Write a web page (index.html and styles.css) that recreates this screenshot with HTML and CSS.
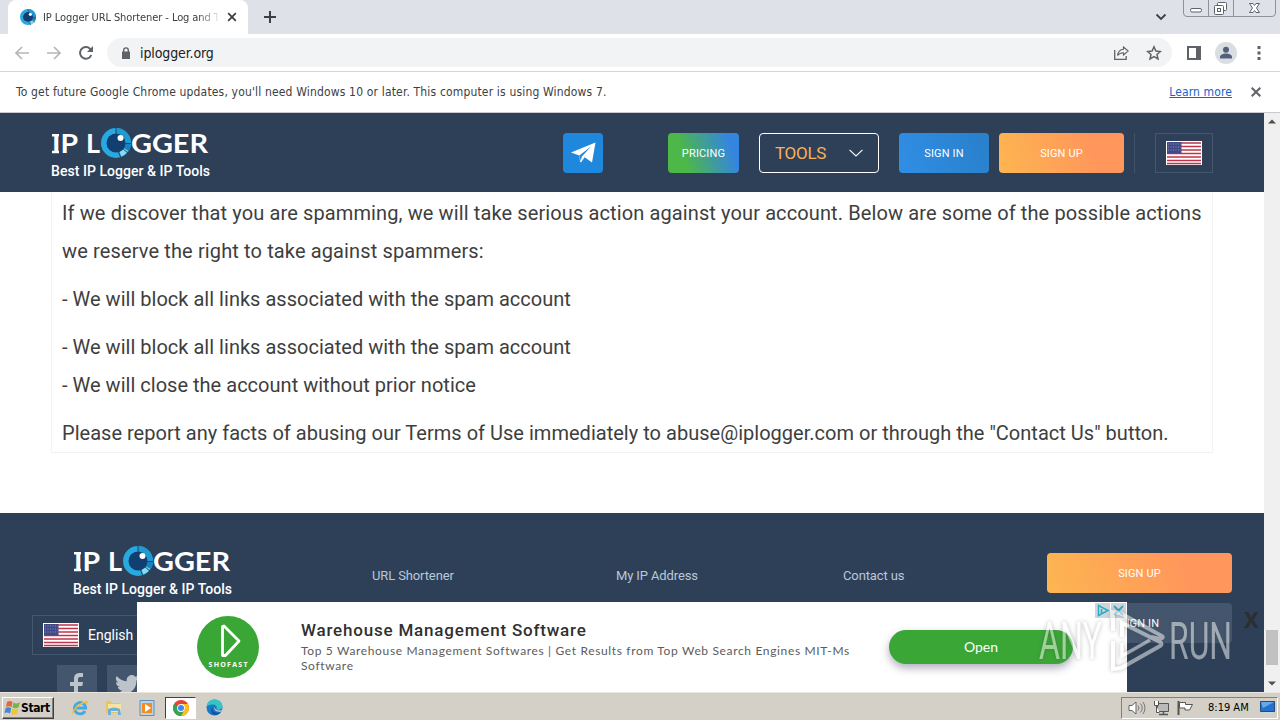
FILE: index.html
```html
<!DOCTYPE html>
<html lang="en">
  <head>
    <meta charset="utf-8">
    <title>IP Logger URL Shortener</title>
    <link rel="stylesheet" href="styles.css">
  </head>
  <body>
    <svg class="defs" width="0" height="0">
      <defs>
        <symbol id="eye" viewBox="0 0 30 30">
          <circle cx="15" cy="15" r="12" fill="none" stroke="#27a9e1" stroke-width="6"/>
          <path d="M15 3a12 12 0 0 1 12 12" fill="none" stroke="#1f9bd1" stroke-width="6"/>
          <path d="M27 15a12 12 0 0 1-2.800 7.700" fill="none" stroke="#1583bd" stroke-width="6"/>
          <path d="M25 21.500a12 12 0 0 1-5.500 4.600" fill="none" stroke="#83dcf7" stroke-width="5"/>
          <path d="M15 0v6M24.500 15.500h5.500M21 20l6 5M17.500 24l2.500 6" stroke="#2e4057" stroke-width="1"/>
          <circle cx="15" cy="15" r="9.500" fill="#123f72"/>
          <circle cx="19.500" cy="10" r="3" fill="#fff"/>
        </symbol>
        <symbol id="logo" viewBox="0 0 158 32">
          <g class="logo-text">
            <text x="0" y="25" textLength="26" lengthAdjust="spacingAndGlyphs">IP</text>
            <text x="34" y="25" textLength="14" lengthAdjust="spacingAndGlyphs">L</text>
            <text x="79" y="25" textLength="77" lengthAdjust="spacingAndGlyphs">GGER</text>
          </g>
          <path d="M0 7.200h7M0 24h7" stroke="#fff" stroke-width="2.400"/>
          <use href="#eye" x="49" y="0" width="30" height="30"/>
        </symbol>
        <symbol id="flag" viewBox="0 0 36 24">
          <path d="M0 0h36v24H0z" fill="#fff"/>
          <path d="M1 2h34M1 5.500h34M1 9h34M1 12.500h34M1 16h34M1 19.500h34M1 22.500h34" stroke="#bf3448" stroke-width="1.700"/>
          <path d="M1 1h14.500v11.500H1z" fill="#414a86"/>
          <path d="M2 3h13M2 6h13M2 9h13" stroke="#8990b8" stroke-width="1" stroke-dasharray="1 1.500"/>
        </symbol>
      </defs>
    </svg>

    <div class="tabstrip">
      <div class="tab">
        <svg class="favicon" width="16" height="16"><use href="#eye"/></svg>
        <span class="tab-title">IP Logger URL Shortener - Log and T</span>
        <svg class="tab-close" width="10" height="10" viewBox="0 0 10 10"><path d="M1.200 1.200l7.600 7.600M8.800 1.200L1.200 8.800" stroke="#3c4043" stroke-width="1.800"/></svg>
      </div>
      <svg class="new-tab" width="12" height="12" viewBox="0 0 12 12"><path d="M6 0v12M0 6h12" stroke="#3c4043" stroke-width="2"/></svg>
      <svg class="tab-search" width="12" height="8" viewBox="0 0 12 8"><path d="M1.500 1.500L6 6l4.500-4.500" fill="none" stroke="#3c4043" stroke-width="1.800"/></svg>
      <svg class="window-buttons" width="93" height="17" viewBox="0 0 93 17">
        <path d="M.5 0v13q0 3.500 3.500 3.500h85q3.500 0 3.500-3.500V0M25.500 0v16M50.500 0v16" fill="none" stroke="#8e9299"/>
        <g fill="#fff" stroke="#5f6368">
          <rect x="7.500" y="8.500" width="11" height="3.500" rx="1.500"/>
          <rect x="34.500" y="2.500" width="9" height="8" rx="1"/>
          <rect x="31.500" y="5.500" width="9" height="9" rx="1"/>
          <rect x="34.500" y="8.500" width="3" height="3"/>
          <path d="M66.500 3.500h3.500l1.500 2 1.500-2h3.500L73.500 8l3 4.500H73l-1.500-2-1.500 2h-3.500L69.500 8z"/>
        </g>
      </svg>
    </div>

    <div class="toolbar">
      <svg class="arrow" width="14" height="14" viewBox="0 0 14 14"><path d="M14 7H1.500M7 1L1 7l6 6" fill="none" stroke="#b5b7ba" stroke-width="1.700"/></svg>
      <svg class="arrow" width="14" height="14" viewBox="0 0 14 14"><path d="M0 7h12.500M7 1l6 6-6 6" fill="none" stroke="#b5b7ba" stroke-width="1.700"/></svg>
      <svg class="reload" width="14" height="14" viewBox="0 0 14 14"><path d="M12.300 9A5.800 5.800 0 1 1 11 2.800L12.500 4.500" fill="none" stroke="#5f6368" stroke-width="2"/><path d="M14 0v6H8z" fill="#5f6368"/></svg>
      <div class="address">
        <svg width="8" height="12" viewBox="0 0 8 12"><path d="M0 4.500h8V12H0z" fill="#5f6368"/><path d="M1.700 5V3.200a2.300 2.300 0 0 1 4.600 0V5" fill="none" stroke="#5f6368" stroke-width="1.400"/></svg>
        <span class="url">iplogger.org</span>
        <svg width="15" height="14" viewBox="0 0 15 14"><path d="M.7 4v9.300h11.500V10" fill="none" stroke="#5f6368" stroke-width="1.300"/><path d="M9.500 1l4.700 4-4.700 4V6.700C6.500 6.700 5 7.500 3.500 9.500 4 6 6 3.500 9.500 3.200z" fill="none" stroke="#5f6368" stroke-width="1.100"/></svg>
        <svg width="16" height="16" viewBox="0 0 16 16"><path d="M8 1.800l1.900 4.200 4.500.5-3.400 3 1 4.500-4-2.300L4 14l1-4.500-3.400-3L6.100 6z" fill="none" stroke="#5f6368" stroke-width="1.500"/></svg>
      </div>
      <svg class="panel" width="14" height="14" viewBox="0 0 14 14"><path d="M1 1h12v12H1z" fill="none" stroke="#5f6368" stroke-width="2"/><path d="M9 0h5v14H9z" fill="#5f6368"/></svg>
      <svg class="profile" width="22" height="22" viewBox="0 0 22 22"><circle cx="11" cy="11" r="11" fill="#dadde2"/><circle cx="11" cy="7.800" r="3" fill="#52607c"/><path d="M5 16.500v-1.300c0-2.500 3-3.700 6-3.700s6 1.200 6 3.700v1.300z" fill="#52607c"/></svg>
      <svg class="menu" width="4" height="14" viewBox="0 0 4 14"><path d="M.5 0h3v3h-3zM.5 5.500h3v3h-3zM.5 11h3v3h-3z" fill="#5f6368"/></svg>
    </div>

    <div class="infobar">
      <span class="infobar-text">To get future Google Chrome updates, you'll need Windows 10 or later. This computer is using Windows 7.</span>
      <a class="learn-more">Learn more</a>
      <svg width="10" height="10" viewBox="0 0 10 10"><path d="M.7.7l8.600 8.600M9.300.7L.7 9.300" stroke="#5f6368" stroke-width="2"/></svg>
    </div>

    <div class="viewport">
      <div class="page">
        <header>
          <div class="brand">
            <svg width="158" height="32"><use href="#logo"/></svg>
            <div class="tagline">Best IP Logger &amp; IP Tools</div>
          </div>
          <div class="telegram">
            <svg width="26" height="22" viewBox="0 0 26 22"><path d="M25.500.5L22 20.500l-7.300-5.300-3.600 5-1-.2-.8-6.500L1 10.500z" fill="#fff"/><path d="M9.300 13.500L21 4.500l-9.300 10.200-.9 4.600z" fill="#1f87dc"/></svg>
          </div>
          <div class="btn pricing">PRICING</div>
          <div class="tools">
            <span>TOOLS</span>
            <svg width="14" height="8" viewBox="0 0 14 8"><path d="M.5.8L7 7l6.500-6.200" fill="none" stroke="#fff" stroke-width="1.100"/></svg>
          </div>
          <div class="btn sign-in">SIGN IN</div>
          <div class="btn sign-up">SIGN UP</div>
          <div class="divider"></div>
          <div class="lang"><svg width="36" height="24"><use href="#flag"/></svg></div>
        </header>

        <article>
          <p><span class="line justified">If we discover that you are spamming, we will take serious action against your account. Below are some of the possible actions</span> <span class="line spammers">we reserve the right to take against spammers:</span></p>
          <p>- We will block all links associated with the spam account</p>
          <p>- We will block all links associated with the spam account<br>- We will close the account without prior notice</p>
          <p>Please report any facts of abusing our Terms of Use immediately to abuse@iplogger.com or through the "Contact Us" button.</p>
        </article>

        <footer>
          <div class="footer-left">
            <div class="brand">
              <svg width="158" height="32"><use href="#logo"/></svg>
              <div class="tagline">Best IP Logger &amp; IP Tools</div>
            </div>
            <div class="lang-select">
              <svg width="36" height="24"><use href="#flag"/></svg>
              <span>English</span>
            </div>
            <div class="social">
              <div><svg width="14" height="24" viewBox="0 0 14 24"><path d="M4 24V13H0V9h4V6c0-4 2-6 6-6h3v4h-3q-2 0-2 2v3h5l-.7 4H8v11z" fill="#bdc3cb"/></svg></div>
              <div><svg width="24" height="20" viewBox="0 0 24 20"><path d="M24 2.400a10 10 0 0 1-2.800.8A5 5 0 0 0 23.300.5a10 10 0 0 1-3.100 1.200A4.900 4.900 0 0 0 11.800 6.200 14 14 0 0 1 1.700 1a5 5 0 0 0 1.500 6.600A5 5 0 0 1 1 7a5 5 0 0 0 3.900 4.900 5 5 0 0 1-2.200.1 5 5 0 0 0 4.600 3.400A10 10 0 0 1 0 17.500a14 14 0 0 0 21.500-12A10 10 0 0 0 24 2.400z" fill="#bdc3cb"/></svg></div>
            </div>
          </div>
          <div class="footer-link shortener">URL Shortener</div>
          <div class="footer-link address-link">My IP Address</div>
          <div class="footer-link">Contact us</div>
          <div class="footer-buttons">
            <div class="btn sign-up">SIGN UP</div>
            <div class="btn muted">SIGN IN</div>
          </div>
        </footer>

        <div class="ad">
          <svg class="ad-logo" width="62" height="62" viewBox="0 0 62 62">
            <circle cx="31" cy="31" r="31" fill="#3aa636"/>
            <path d="M25.500 10.500v29l3 0 13.500-14.500-15-15z" fill="none" stroke="#fff" stroke-width="2.800" stroke-linejoin="round"/>
            <text x="11.500" y="50.500" textLength="39" class="ad-brand">SHOFAST</text>
          </svg>
          <div class="ad-copy">
            <div class="ad-title">Warehouse Management Software</div>
            <div class="ad-text">Top 5 Warehouse Management Softwares | Get Results from Top Web Search Engines MIT-Ms<br>Software</div>
          </div>
          <div class="ad-open">Open</div>
          <svg class="ad-choices" width="32" height="15" viewBox="0 0 32 15">
            <path d="M0 0h15v15H0zM16 0h15v15H16z" fill="#d1d5d8"/>
            <path d="M3.500 2.500v10L13 7.500zM6.500 6v4" fill="none" stroke="#20b0c9" stroke-width="1.500"/>
            <path d="M19 3l9 9M28 3l-9 9" stroke="#20b0c9" stroke-width="1.800"/>
          </svg>
        </div>
        <div class="ad-close">X</div>
      </div>

      <div class="scrollbar">
        <svg width="8" height="5" viewBox="0 0 8 5"><path d="M0 4.500L4 .5l4 4z" fill="#505050"/></svg>
        <div class="thumb"></div>
        <svg width="8" height="5" viewBox="0 0 8 5"><path d="M0 .5l4 4 4-4z" fill="#505050"/></svg>
      </div>
    </div>

    <svg class="watermark" width="196" height="66" viewBox="0 0 196 66">
      <g class="watermark-text">
        <text x="1" y="52" textLength="63" lengthAdjust="spacingAndGlyphs">ANY</text>
        <text x="131" y="52" textLength="63" lengthAdjust="spacingAndGlyphs">RUN</text>
      </g>
      <path d="M75 24V5l7 1 42 23q2 2-2 3l-9-2" fill="none" stroke="#fff" stroke-width="4"/>
      <path d="M84 30V16l38 19q3 2 0 4L83 61l-8 1V34" fill="none" stroke="#fff" stroke-width="4"/>
      <path d="M84 36v13l28-16" fill="none" stroke="#fff" stroke-width="3.500"/>
    </svg>

    <div class="taskbar">
      <div class="start">
        <svg width="17" height="16" viewBox="0 0 17 16"><path d="M3 2q3-2 5.500 0L7.500 7.200Q5 5.500 2 7z" fill="#e5673b"/><path d="M9.500 2.500Q13 4.500 16 2l-1.500 5.500Q11 9 8.500 7.500z" fill="#74b843"/><path d="M1.700 8Q4.500 6.500 7.200 8.200L6 13.500Q3.500 12 .5 13z" fill="#3f8bd0"/><path d="M8.200 8.500Q11.500 10 14.300 8.500L13 14q-3 1.500-6 0z" fill="#f5c431"/></svg>
        <span>Start</span>
      </div>
      <svg class="task" width="18" height="18" viewBox="0 0 18 18"><path d="M14 12a5.700 5.700 0 1 1 .7-3H5" fill="none" stroke="#45a9df" stroke-width="2.800"/><path d="M1 16C-1 12 10 1 17 2c0 1-1 3-2 4 2-4-5-1-9 3-3 3-5 6-5 7z" fill="#edbd3f"/></svg>
      <svg class="task" width="18" height="18" viewBox="0 0 18 18"><path d="M1 2h5l1 2h8v10H1z" fill="#e7c564"/><path d="M3 5h13v8H3z" fill="#f8e4a0"/><path d="M3 10q6-3 12 0l1 6h-3v-4H6v4H3z" fill="#6cb0d9"/></svg>
      <svg class="task" width="18" height="18" viewBox="0 0 18 18"><path d="M1 1.500h14v15H1z" fill="#b9d2e6" stroke="#5e91b8"/><path d="M3 4h10v10H3z" fill="#f28b20"/><path d="M6 5v8L12 9z" fill="#fff"/></svg>
      <div class="task-active">
        <svg width="16" height="16" viewBox="0 0 16 16"><circle cx="8" cy="8" r="8" fill="#e64235"/><path d="M8 8L1.100 4A8 8 0 0 0 8 16l4-6z" fill="#33a650"/><path d="M8 4h6.900A8 8 0 0 1 8 16l4-7z" fill="#fbc116"/><circle cx="8" cy="8" r="3.900" fill="#fff"/><circle cx="8" cy="8" r="3" fill="#4285f4"/></svg>
      </div>
      <svg class="edge" width="17" height="17" viewBox="0 0 17 17"><circle cx="8.500" cy="8.500" r="8" fill="#1679c9"/><path d="M.5 8C1 3 4.500.5 8.500.5c5 0 8 3.500 8 7 0 3-4 4-6 2.500 1-3-1-4.500-4-4.500S1.500 6.500.5 8z" fill="#36c5c4"/><path d="M7 8c-2 4 2 7 7.500 5-1 1-2.500 2.500-5 3C5 15.500 4 10.500 7 8z" fill="#164f9c"/><path d="M8.500 8c0 3 4 4.500 8 3l-1 1.500C10.500 13.500 7.500 11 8.500 8z" fill="#d4d0c8"/></svg>
      <div class="tray">
        <svg width="18" height="16" viewBox="0 0 18 16"><path d="M1 5.500h3L8 2v12l-4-3.500H1z" fill="#fff" stroke="#666"/><path d="M10 5.500q2 2.500 0 5M12.500 3.500q3.500 4.500 0 9M15 2q4 6 0 12" fill="none" stroke="#777"/></svg>
        <svg width="17" height="16" viewBox="0 0 17 16"><path d="M4.500 3.500h11v8h-11z" fill="#b9b9b9" stroke="#555"/><path d="M6 14.500h9M10.500 12v2" stroke="#555" stroke-width="1.500"/><path d="M1.500 1v4.500h4V1M3.500 6v6.500h3" fill="#fff" stroke="#555"/></svg>
        <svg width="17" height="16" viewBox="0 0 17 16"><path d="M1.500 1v14" stroke="#555" stroke-width="2"/><path d="M2.500 2.500h6v2h7L12.500 10H8V8H2.500z" fill="#fff" stroke="#555"/></svg>
        <span class="clock">8:19 AM</span>
        <svg width="15" height="13" viewBox="0 0 15 13"><path d="M.5.500h14v10H.5z" fill="#2472cc" stroke="#234b82"/><path d="M1 1h13L3 7z" fill="#65abe9"/><path d="M5 12h6" stroke="#c0d7ed" stroke-width="2"/></svg>
      </div>
    </div>
  </body>
</html>
```
FILE: styles.css
```css
* {
  box-sizing: border-box;
}
body {
  margin: 0;
  width: 1280px;
  height: 720px;
  overflow: hidden;
  background: #ffffff;
  font-family: Roboto, "Liberation Sans", sans-serif;
}
svg {
  display: block;
  flex: none;
}
.defs {
  position: absolute;
}

/* browser window */
.tabstrip,
.toolbar,
.infobar {
  display: flex;
  align-items: center;
  font-family: "DejaVu Sans Condensed", "DejaVu Sans", sans-serif;
  font-stretch: condensed;
  color: #3c4043;
}
.tabstrip {
  height: 34px;
  background: #dee1e8;
}
.tab {
  display: flex;
  align-items: center;
  width: 240px;
  height: 34px;
  margin-left: 8px;
  padding-left: 12px;
  background: #ffffff;
  border-radius: 8px 8px 0 0;
}
.tab-title {
  width: 175px;
  margin-left: 7px;
  overflow: hidden;
  white-space: nowrap;
  font-size: 11px;
  letter-spacing: -0.08px;
  -webkit-mask-image: linear-gradient(to right, #000 155px, transparent 178px);
}
.tab-close {
  margin-left: 9px;
}
.new-tab {
  margin-left: 16px;
}
.tab-search {
  margin-left: auto;
}
.window-buttons {
  align-self: flex-start;
  margin: 0 4px 0 16px;
}
.toolbar {
  height: 38px;
  padding-left: 15px;
  border-bottom: 1px solid #d5d6d9;
}
.arrow {
  margin-right: 18px;
}
.address {
  display: flex;
  align-items: center;
  width: 1065px;
  height: 29px;
  margin-left: 14px;
  padding: 0 10px 0 15px;
  gap: 17px;
  background: #f1f3f4;
  border-radius: 15px;
}
.url {
  flex: 1;
  margin-left: -7px;
  font-size: 14px;
  letter-spacing: -0.1px;
  color: #202124;
}
.panel {
  margin-left: 15px;
}
.profile {
  margin-left: 14px;
}
.menu {
  margin-left: 20px;
}
.infobar {
  height: 41px;
  padding: 0 19px 0 16px;
  font-size: 12px;
  border-bottom: 1px solid #c8cbd0;
}
.infobar-text {
  flex: 1;
  letter-spacing: 0.165px;
}
.learn-more {
  margin-right: 19px;
  letter-spacing: 0.12px;
  color: #1a62c5;
  text-decoration: underline;
}

/* page */
.viewport {
  display: flex;
  height: 579px;
}
.page {
  position: relative;
  width: 1264px;
  height: 579px;
  overflow: hidden;
}
header {
  display: flex;
  align-items: flex-start;
  height: 79px;
  padding: 20px 51px 0 51px;
  background: #2d4058;
}
header .brand {
  margin: -5px 353px 0 0;
}
.brand {
  width: 159px;
}
.logo-text {
  font: 700 26px Lato, sans-serif;
  fill: #ffffff;
}
.brand svg {
  margin-left: 1px;
}
.tagline {
  margin-top: -2px;
  font-size: 14px;
  line-height: 26px;
  font-weight: 500;
  letter-spacing: 0.04px;
  white-space: nowrap;
  color: #ffffff;
}
.btn,
.telegram,
.tools {
  display: flex;
  align-items: center;
  justify-content: center;
  height: 40px;
  border-radius: 4px;
}
.btn {
  font-size: 11px;
  letter-spacing: 0.15px;
  color: #ffffff;
}
.telegram {
  width: 40px;
  margin-right: 65px;
  background: #1f87dc;
}
.pricing {
  width: 71px;
  margin-right: 20px;
  background: linear-gradient(70deg, #4db748 25%, #3485e0 85%);
}
.tools {
  justify-content: space-between;
  width: 120px;
  margin-right: 20px;
  padding: 0 15px;
  border: 1px solid #ffffff;
  font-size: 17px;
  letter-spacing: -0.3px;
  color: #fdb055;
}
.sign-in {
  width: 90px;
  margin-right: 10px;
  background: linear-gradient(70deg, #308ee5, #2980ca);
}
.sign-up {
  width: 125px;
  background: linear-gradient(70deg, #fdb650, #ff965c 75%);
}
.divider {
  width: 1px;
  height: 40px;
  margin: 0 20px 0 10px;
  background: #40536b;
}
.lang {
  width: 58px;
  height: 40px;
  padding: 7px 10px;
  border: 1px solid #44576e;
}
article {
  width: 1162px;
  height: 261px;
  margin: 0 0 60px 51px;
  padding: 2px 10px 0;
  border: 1px solid #f3f3f3;
  border-top: 0;
  font-size: 20px;
  line-height: 38px;
  letter-spacing: 0.02px;
  color: #3e3e3e;
}
p {
  margin: 0 0 10px;
  white-space: nowrap;
}
.line {
  display: block;
}
.justified {
  letter-spacing: 0.115px;
}
.spammers {
  letter-spacing: 0.13px;
}
footer {
  display: flex;
  height: 179px;
  background: #2d4058;
}
.footer-left {
  width: 372px;
  padding: 33px 0 0 32px;
}
.footer-left .brand {
  margin-left: 41px;
}
.lang-select {
  display: flex;
  align-items: center;
  width: 240px;
  height: 40px;
  margin-top: 13px;
  padding-left: 10px;
  border: 1px solid #44576e;
  font-size: 14px;
  color: #ffffff;
}
.lang-select span {
  margin-left: 9px;
}
.social {
  display: flex;
  gap: 10px;
  margin: 10px 0 0 25px;
}
.social div {
  display: flex;
  align-items: center;
  justify-content: center;
  width: 40px;
  height: 40px;
  background: #43566d;
}
.footer-link {
  padding-top: 55px;
  font-size: 13px;
  line-height: 16px;
  letter-spacing: -0.12px;
  white-space: nowrap;
  color: #b9c8d9;
}
.shortener {
  width: 244px;
}
.address-link {
  width: 227px;
}
.footer-buttons {
  margin: 40px 32px 0 auto;
}
.footer-buttons .btn {
  width: 185px;
  margin-bottom: 10px;
}
.footer-buttons .muted {
  background: #43566d;
}

/* anchored ad, lies over the footer */
.ad {
  position: absolute;
  left: 137px;
  bottom: 0;
  display: flex;
  align-items: center;
  width: 990px;
  height: 90px;
  padding: 0 54px 0 60px;
  background: #ffffff;
  color: #5c5c5c;
}
.ad-brand {
  font: 700 7px "Open Sans", sans-serif;
  fill: #ffffff;
}
.ad-copy {
  flex: 1;
  margin: -2px 0 0 42px;
  white-space: nowrap;
}
.ad-title {
  font: 500 17px/22px Roboto, sans-serif;
  letter-spacing: 0.8px;
  color: #303030;
}
.ad-text {
  font: 12px/15px Lato, sans-serif;
  letter-spacing: 0.65px;
  margin-top: 2px;
}
.ad-open {
  width: 184px;
  height: 34px;
  border-radius: 17px;
  background: #3aa636;
  box-shadow: 0 4px 8px rgba(60, 50, 90, 0.4);
  font: 14px/34px Lato, sans-serif;
  text-align: center;
  color: #ffffff;
}
.ad-choices {
  position: absolute;
  top: 1px;
  right: 0;
}
.ad-close {
  position: absolute;
  right: 5px;
  bottom: 57px;
  font: bold 22px/28px "DejaVu Sans Condensed", "DejaVu Sans", sans-serif;
  font-stretch: condensed;
  color: #2c2e32;
}

/* scrollbar */
.scrollbar {
  display: flex;
  flex-direction: column;
  align-items: center;
  width: 16px;
  padding: 6px 0;
  background: #f0f0f0;
}
.thumb {
  width: 12px;
  height: 35px;
  margin: auto 0 16px;
  background: #c1c1c1;
}

.watermark {
  position: absolute;
  left: 1038px;
  top: 607px;
  opacity: 0.5;
  filter: drop-shadow(0 0 2px rgba(70, 70, 70, 0.7));
}
.watermark-text {
  font: 52px Roboto, sans-serif;
  fill: #ffffff;
}

/* taskbar */
.taskbar {
  display: flex;
  align-items: center;
  height: 28px;
  padding: 2px 2px 0;
  background: #d4d0c8;
  border-top: 1px solid #e8e5df;
  font-family: "DejaVu Sans Condensed", "DejaVu Sans", sans-serif;
  font-stretch: condensed;
  font-size: 11px;
  color: #000000;
}
.start {
  display: flex;
  align-items: center;
  width: 52px;
  height: 22px;
  margin-right: 17px;
  padding-left: 1px;
  border: 1px solid;
  border-color: #ffffff #404040 #404040 #ffffff;
  box-shadow: inset -1px -1px #808080;
  font-weight: bold;
}
.start span {
  font-size: 12px;
  letter-spacing: -0.4px;
}
.task {
  margin-right: 16px;
}
.task-active {
  width: 31px;
  height: 22px;
  margin: 0 11px 0 -8px;
  padding: 2px 7px;
  border: 1px solid;
  border-color: #404040 #ffffff #ffffff #404040;
  background: #ffffff;
}
.edge {
  margin-left: -1px;
}
.tray {
  display: flex;
  align-items: center;
  width: 157px;
  height: 22px;
  margin-left: auto;
  padding-left: 6px;
  border: 1px solid;
  border-color: #808080 #ffffff #ffffff #808080;
}
.tray svg {
  margin-right: 7px;
}
.clock {
  width: 44px;
  margin: 0 8px 0 7px;
  white-space: nowrap;
}
.tray svg:last-child {
  margin-right: 0;
}
```
